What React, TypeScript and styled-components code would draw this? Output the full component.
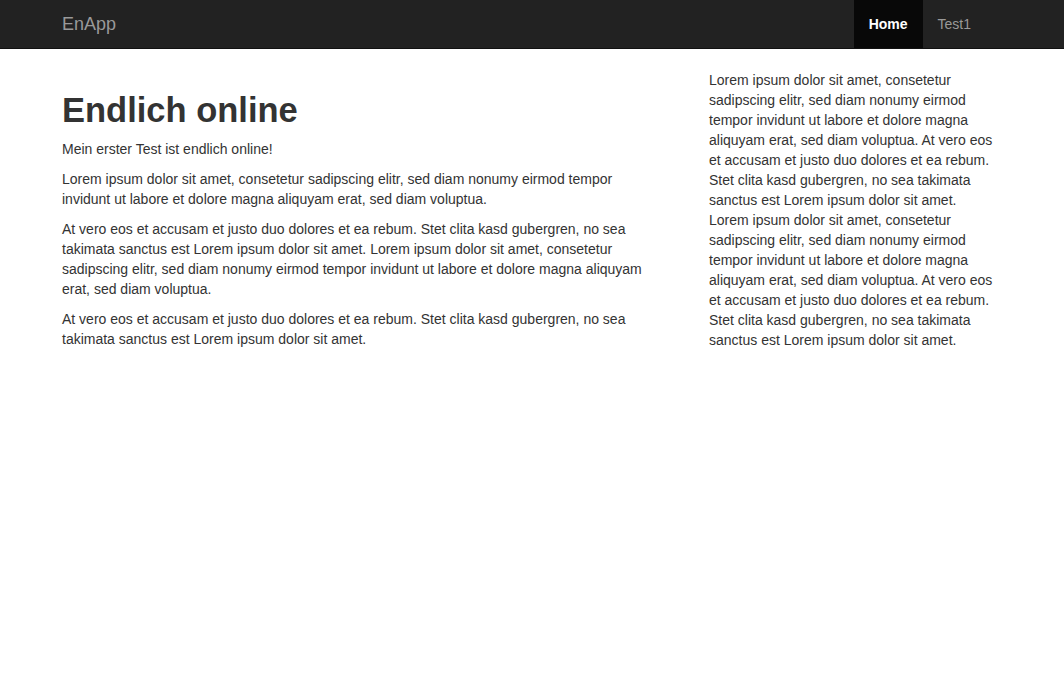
import styled, { createGlobalStyle } from 'styled-components';

const GlobalStyle = createGlobalStyle`
	body {
		margin: 0;
		background: #fff;
		font-family: 'Liberation Sans', Arial, sans-serif;
		font-size: 14px;
		line-height: 20px;
		color: #333;
	}
`;

const lorem =
	'Lorem ipsum dolor sit amet, consetetur sadipscing elitr, sed diam nonumy eirmod tempor invidunt ut labore et dolore magna aliquyam erat, sed diam voluptua.';
const vero =
	'At vero eos et accusam et justo duo dolores et ea rebum. Stet clita kasd gubergren, no sea takimata sanctus est Lorem ipsum dolor sit amet.';

const navLinks = [
	{ label: 'Home', active: true },
	{ label: 'Test1', active: false },
];

const App = () => {
	return (
		<>
			<GlobalStyle />
			<Navbar>
				<NavInner>
					<Brand href='#'>EnApp</Brand>
					<Nav>
						{navLinks.map((item) => (
							<NavLink key={item.label} href='#' $active={item.active}>
								{item.label}
							</NavLink>
						))}
					</Nav>
				</NavInner>
			</Navbar>
			<Container>
				<Main>
					<Title>Endlich online</Title>
					<Text>Mein erster Test ist endlich online!</Text>
					<Text>{lorem}</Text>
					<Text>
						{vero} {lorem}
					</Text>
					<Text>{vero}</Text>
				</Main>
				<Sidebar>
					{lorem} {vero} {lorem} {vero}
				</Sidebar>
			</Container>
		</>
	);
};

const Navbar = styled.header`
	height: 48px;
	background-color: #222;
	border-bottom: 1px solid #111;
`;

const NavInner = styled.div`
	width: 1002px;
	margin-left: 62px;
	height: 100%;
	display: flex;
	align-items: stretch;
	justify-content: space-between;
`;

const Brand = styled.a`
	display: flex;
	align-items: center;
	font-size: 18px;
	color: #999;
	text-decoration: none;
	padding-bottom: 1px;
`;

const Nav = styled.nav`
	display: flex;
	align-items: stretch;
	margin-right: 78px;
`;

const NavLink = styled.a<{ $active: boolean }>`
	display: flex;
	align-items: center;
	padding: 0 15px 1px;
	font-size: 14px;
	text-decoration: none;
	color: ${(p) => (p.$active ? '#fff' : '#999')};
	font-weight: ${(p) => (p.$active ? 'bold' : 'normal')};
	background-color: ${(p) => (p.$active ? '#080808' : 'transparent')};
`;

const Container = styled.main`
	width: 940px;
	margin: 0 auto;
	display: grid;
	grid-template-columns: 585px 286px;
	gap: 62px;
`;

const Main = styled.section`
	padding-top: 30px;
`;

const Title = styled.h1`
	margin: 10px 0;
	font-size: 34.5px;
	line-height: 40px;
	font-weight: bold;
	color: #333;
	position: relative;
	top: 1px;
`;

const Text = styled.p`
	margin: 0 0 10px;
`;

const Sidebar = styled.aside`
	padding-top: 21px;
`;

export default App;
